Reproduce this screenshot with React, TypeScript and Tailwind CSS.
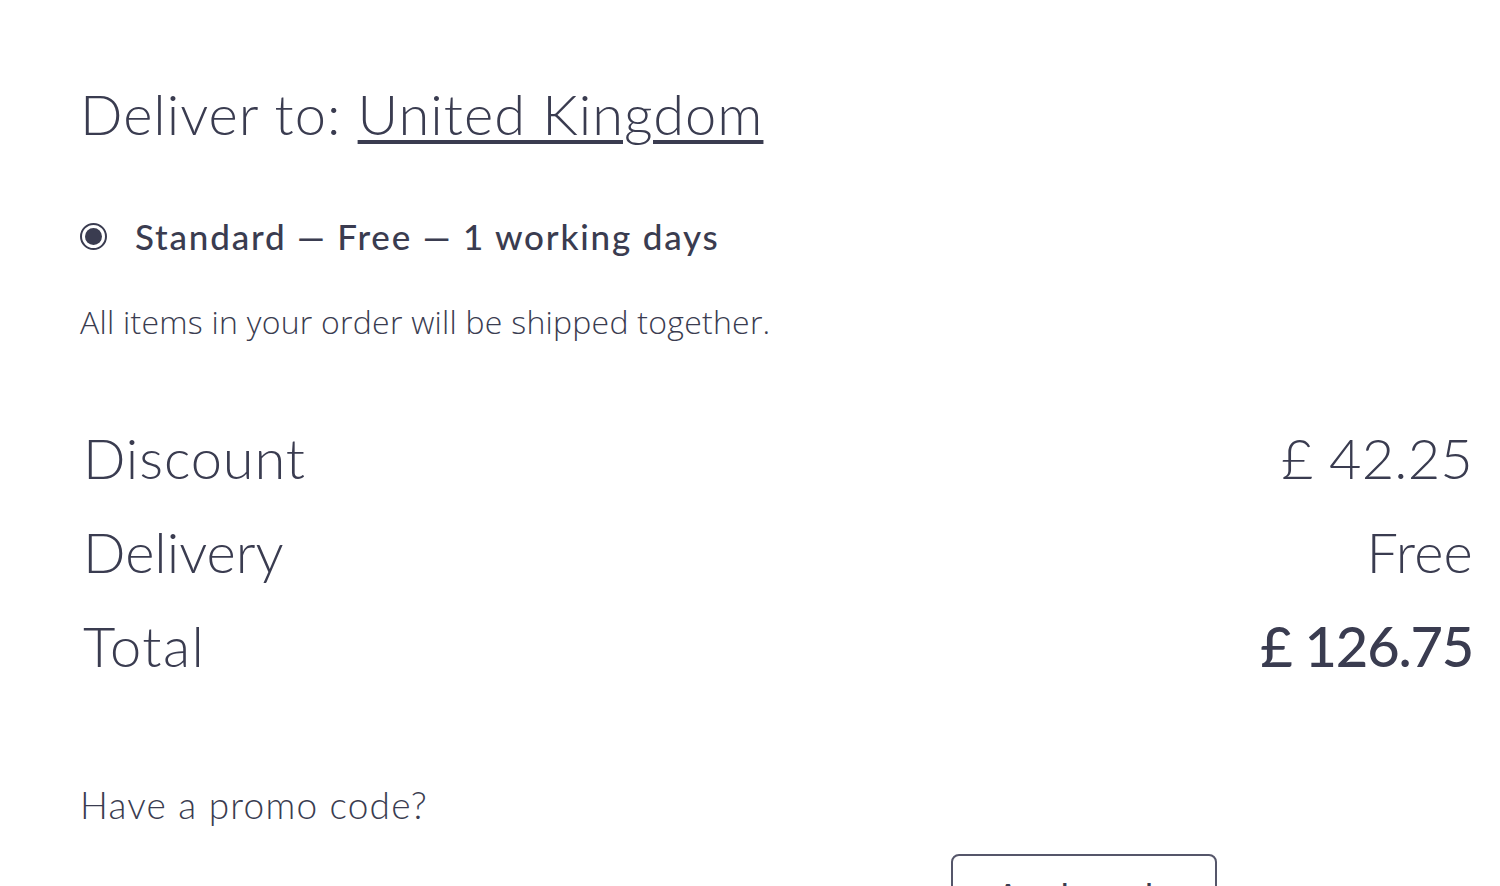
import React from "react";

export default function App() {
  const font = { fontFamily: "Lato, 'Noto Sans', sans-serif" };
  return (
    <div className="h-[886px] w-full bg-white text-[#3a3c50] overflow-hidden" style={font}>
      <div className="pl-[80px] pr-[27px] pt-[82px]">
        <h2 className="text-[56px] leading-[64px] font-light tracking-[1px]">
          Deliver to:{" "}
          <a href="#" className="underline decoration-[4px] underline-offset-[5px]">United Kingdom</a>
        </h2>

        <label className="mt-[70px] flex items-center gap-[28px]">
          <span className="flex h-[27px] w-[27px] items-center justify-center rounded-full border-[2px] border-[#3a3c50]">
            <span className="h-[17px] w-[17px] rounded-full bg-[#3a3c50]" />
          </span>
          <span className="text-[35px] leading-[40px] font-medium tracking-[1.8px]">
            Standard — Free — 1 working days
          </span>
        </label>

        <p className="mt-[46px] text-[32px] leading-[40px] font-light tracking-[0.25px]" style={{ fontFamily: "'Open Sans', Lato, sans-serif" }}>
          All items in your order will be shipped together.
        </p>

        <div className="mt-[84px] flex flex-col gap-[30px] pl-[3px]">
          <div className="flex items-center justify-between text-[56px] leading-[64px] font-light">
            <span className="tracking-[0.9px]">Discount</span>
            <span className="tracking-[0.2px]">£ 42.25</span>
          </div>
          <div className="flex items-center justify-between text-[56px] leading-[64px] font-light">
            <span>Delivery</span>
            <span className="tracking-[0.2px]">Free</span>
          </div>
          <div className="flex items-center justify-between text-[56px] leading-[64px]">
            <span className="font-light tracking-[1.5px]">Total</span>
            <span className="font-medium tracking-[-1.2px]">£ 126.75</span>
          </div>
        </div>

        <p className="mt-[105px] text-[37px] leading-[44px] font-light tracking-[1.2px]">Have a promo code?</p>

        <div className="mt-[27px] flex pl-[871px]">
          <button className="h-[80px] w-[266px] rounded-[8px] border-[2px] border-[#55566a] bg-white pt-[3px] text-[36px] leading-[40px] font-normal text-[#3a3c50]">
            Apply code
          </button>
        </div>
      </div>
    </div>
  );
}
